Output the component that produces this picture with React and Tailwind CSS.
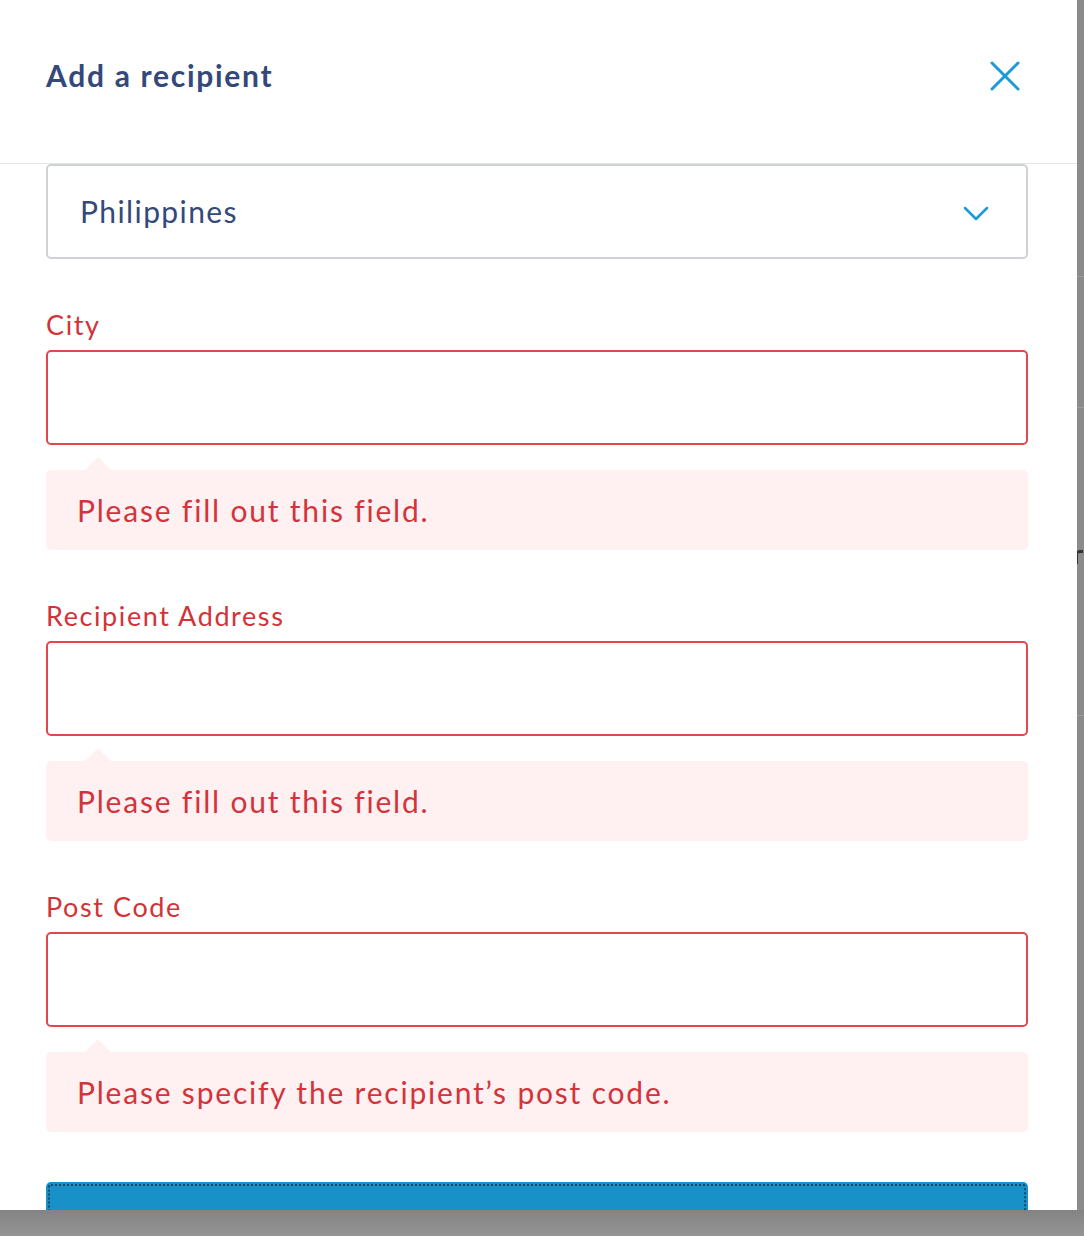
import React from 'react';

const FONT = "font-['Lato','Open_Sans',sans-serif]";

const ErrorTip = ({ children }) => (
  <div className="relative mt-[25px] h-[80px] rounded-[5px] bg-[#fff1f2] flex items-center px-[31px]">
    {/* little arrow pointing up at the input */}
    <span className="absolute -top-[13px] left-[39px] w-0 h-0 border-l-[13px] border-r-[13px] border-b-[13px] border-l-transparent border-r-transparent border-b-[#fff1f2]" />
    <p className="text-[30px] leading-none text-[#d3343b] tracking-[1.8px]">{children}</p>
  </div>
);

const Field = ({ label, message }) => (
  <div className="mt-[49px]">
    <label className="block text-[27px] leading-[34px] text-[#d23339] tracking-[1.6px] mb-[8px]">{label}</label>
    <div className="h-[95px] border-2 border-[#e2474b] rounded-[5px] bg-white" />
    <ErrorTip>{message}</ErrorTip>
  </div>
);

export default function App() {
  return (
    <div className={`w-[1084px] h-[1236px] flex flex-col bg-[#8b8b8b] ${FONT}`}>
      <div className="flex h-[1210px]">
        {/* Modal panel */}
        <div className="w-[1077px] h-full bg-white overflow-hidden flex flex-col">
          {/* Header */}
          <div className="h-[164px] shrink-0 border-b border-[#e3e6ea] flex items-center justify-between pl-[46px] pr-[57px] pb-[12px]">
            <h2 className="text-[30px] font-bold text-[#34497a] tracking-[1.7px]">Add a recipient</h2>
            <button className="w-[30px] h-[30px] flex items-center justify-center">
              <svg width="30" height="30" viewBox="0 0 30 30" fill="none" stroke="#1a9ad6" strokeWidth="3" strokeLinecap="round">
                <path d="M2 2 L28 28" />
                <path d="M28 2 L2 28" />
              </svg>
            </button>
          </div>

          {/* Form body */}
          <div className="pl-[46px] pr-[49px]">
            <div className="h-[95px] border-2 border-[#cfd1d6] rounded-[5px] flex items-center justify-between pl-[32px] pr-[37px]">
              <span className="text-[30px] text-[#34497a] tracking-[1.4px]">Philippines</span>
              <svg width="26" height="16" viewBox="0 0 26 16" fill="none" stroke="#1a9ad6" strokeWidth="2.5" strokeLinecap="round" strokeLinejoin="round" className="mt-[4px]">
                <path d="M2 2 L13 13 L24 2" />
              </svg>
            </div>

            <Field label="City" message="Please fill out this field." />
            <Field label="Recipient Address" message="Please fill out this field." />
            <Field label="Post Code" message="Please specify the recipient’s post code." />

            <button className="mt-[50px] w-full h-[64px] rounded-[5px] bg-[#1890c8] outline-2 outline-dotted outline-[#0d4a6e] outline-offset-[-4px]" />
          </div>
        </div>

        {/* Backdrop visible on the right */}
        <div className="flex-1 flex flex-col overflow-hidden">
          <div className="h-[277px] border-b border-[#9c9c9c]" />
          <div className="h-[131px] border-b border-[#9c9c9c]" />
          <div className="h-[308px] border-b border-[#9c9c9c] flex items-center">
            <div className="mb-[10px] w-[7px] h-[14px] border-t-[3px] border-l-[2px] border-[#333] rounded-tl-[4px] -ml-[1px]" />
          </div>
          <div className="flex-1" />
        </div>
      </div>
      <div className="flex-1 bg-linear-to-b from-[#838383] to-[#959595]" />
    </div>
  );
}
